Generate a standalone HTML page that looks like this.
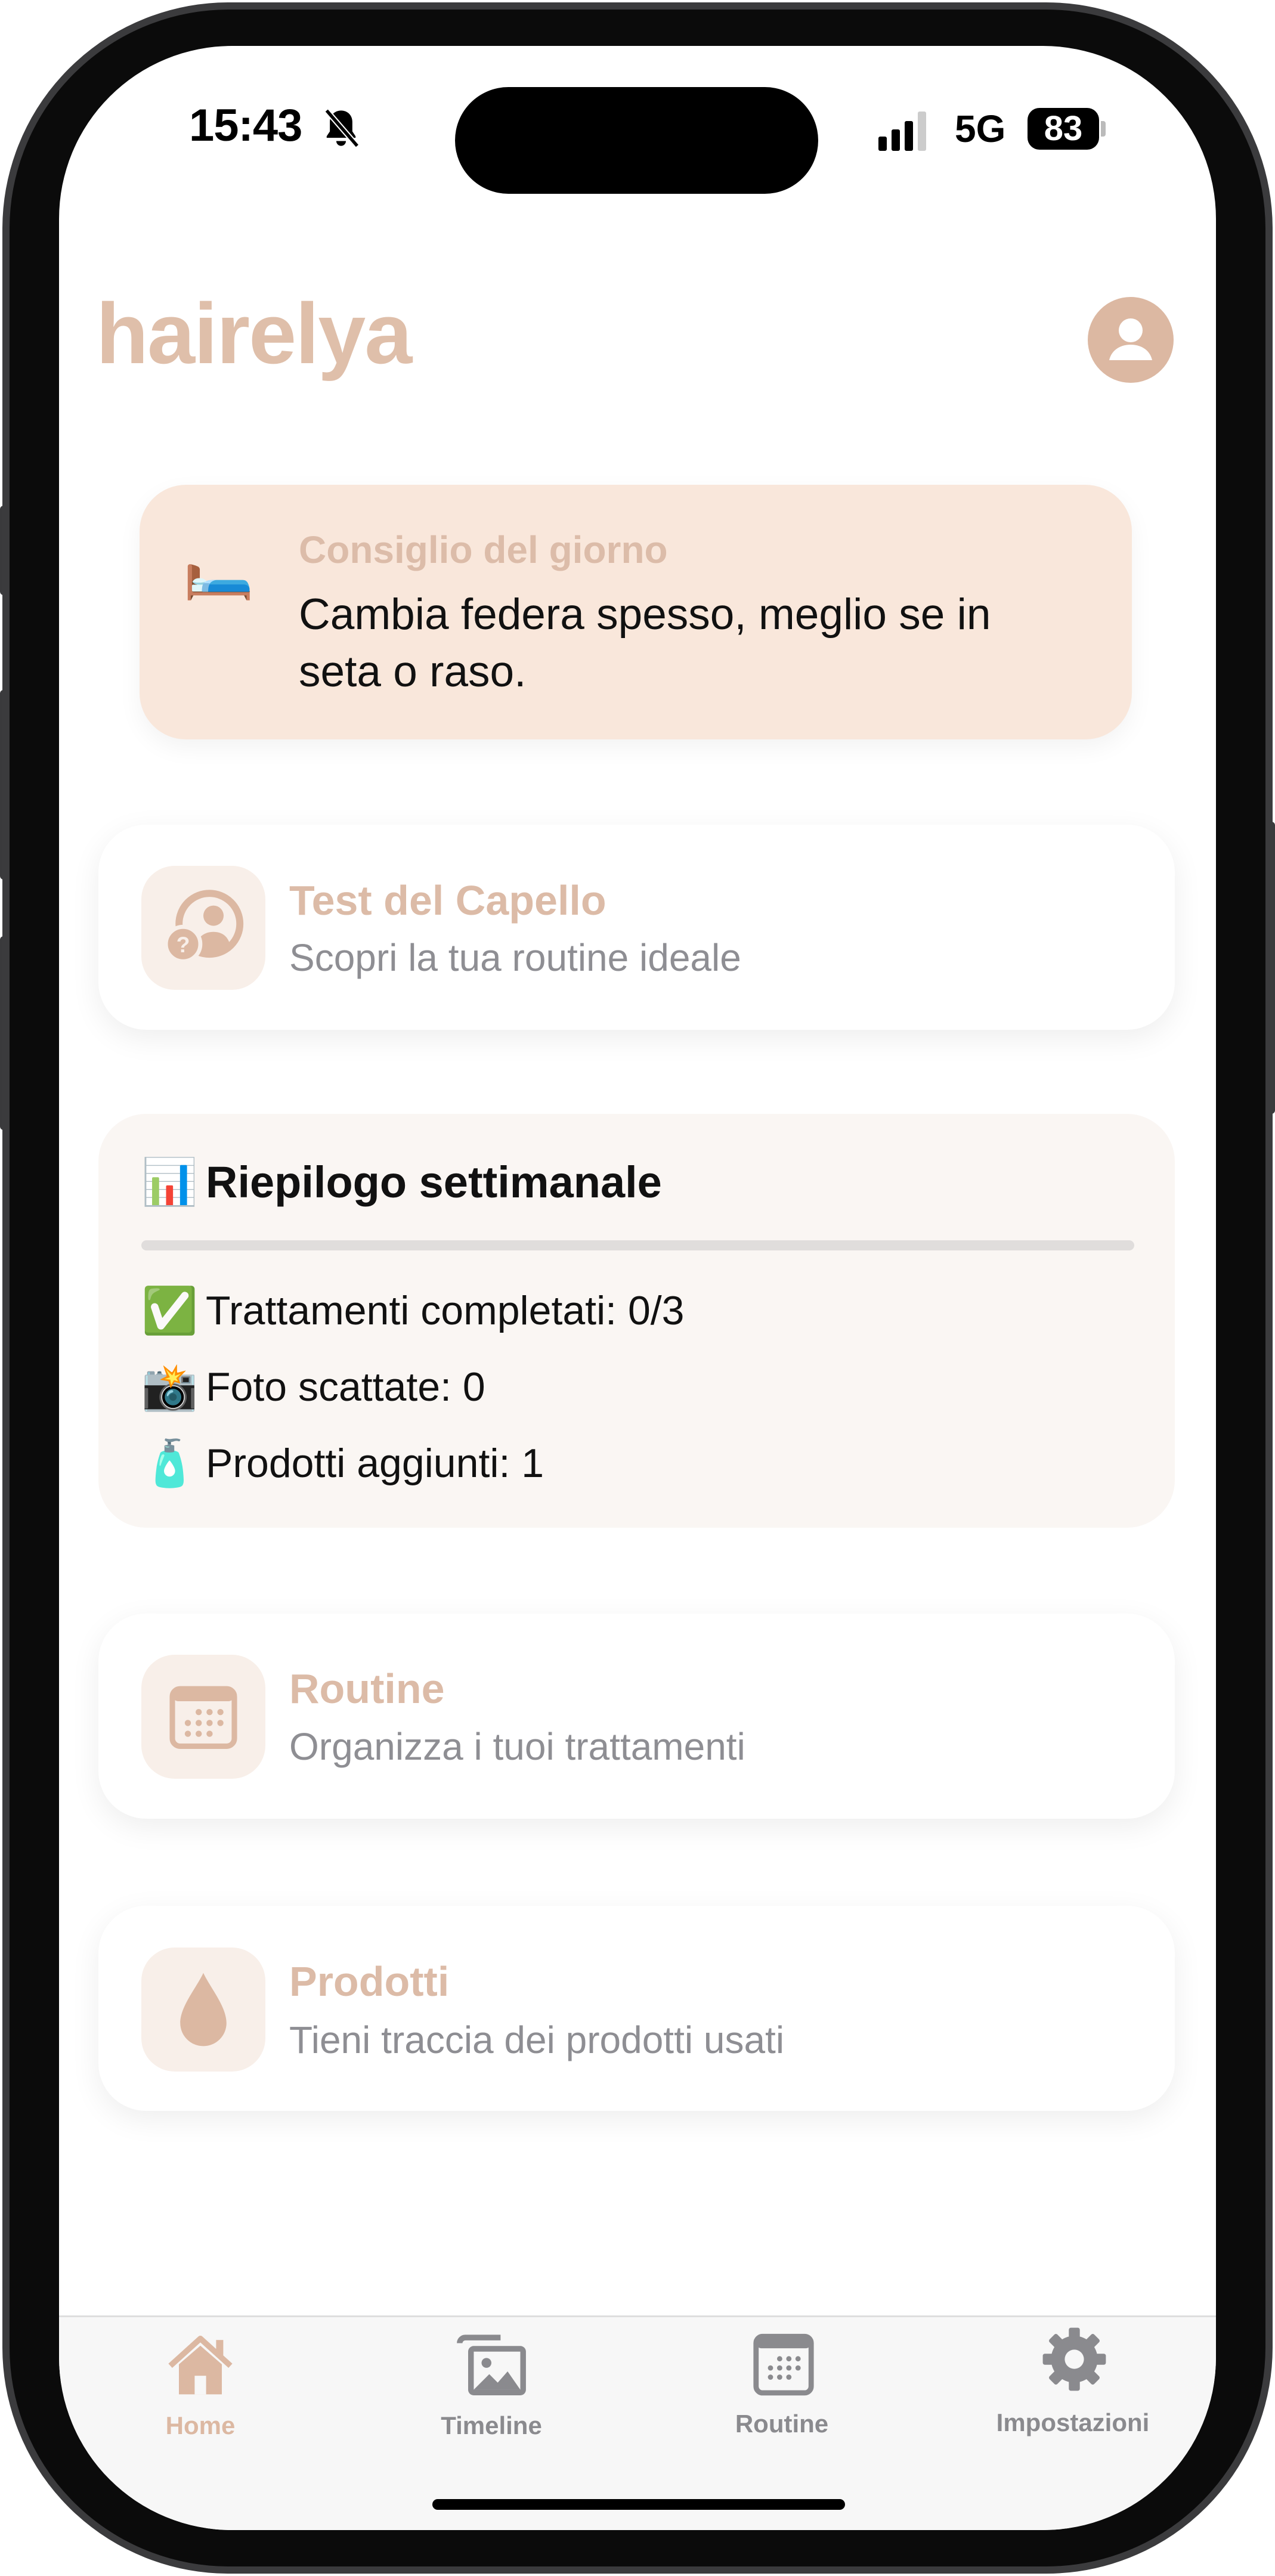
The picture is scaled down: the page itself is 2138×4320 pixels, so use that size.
<!DOCTYPE html>
<html><head><meta charset="utf-8">
<style>
*{margin:0;padding:0;box-sizing:border-box}
html,body{width:2138px;height:4320px;background:#fff;overflow:hidden;font-family:"Liberation Sans",sans-serif}
.abs{position:absolute}
.phone{left:4px;top:4px;width:2130px;height:4312px;border-radius:380px;background:#0b0b0b;border:12px solid #3b3b3d}
.screen{left:99px;top:77px;width:1940px;height:4166px;border-radius:290px;background:#fff;overflow:hidden}
.card{background:#fff;border-radius:80px;box-shadow:0 14px 50px rgba(0,0,0,0.07)}
.ibox{width:208px;height:208px;border-radius:56px;background:#f8efe9;display:flex;align-items:center;justify-content:center}
.t{color:#dcbba7;font-size:70px;font-weight:bold;white-space:nowrap}
.s{color:#8e8e93;font-size:64px;white-space:nowrap}
.row{font-size:68px;color:#111;white-space:nowrap;display:flex;align-items:center}
.row span{font-size:76px;margin-right:18px;width:90px;display:inline-block}
.tab{font-size:42px;color:#8a8a8e;text-align:center;width:400px;font-weight:bold}
.btn{background:#3a3a3c;border-radius:6px}
</style></head><body>
<div class="abs btn" style="left:0;top:848px;width:14px;height:150px"></div>
<div class="abs btn" style="left:0;top:1157px;width:14px;height:318px"></div>
<div class="abs btn" style="left:0;top:1570px;width:14px;height:325px"></div>
<div class="abs btn" style="left:2124px;top:1378px;width:14px;height:490px"></div>
<div class="abs phone"></div>
<div class="abs screen">
  <div class="abs" style="left:218px;top:90px;font-size:76px;font-weight:bold;color:#000;letter-spacing:-1px">15:43</div>
  <svg class="abs" style="left:440px;top:103px" width="66" height="70" viewBox="0 0 24 26"><path d="M12 2c-4 0-7 3-7 7v6l-2 3v1h18v-1l-2-3V9c0-4-3-7-7-7z M9 21a3 3 0 0 0 6 0z" fill="#000"/><path d="M3 2l19 22" stroke="#fff" stroke-width="3.5"/><path d="M3 2l19 22" stroke="#000" stroke-width="2"/></svg>
  <div class="abs" style="left:664px;top:69px;width:609px;height:179px;border-radius:90px;background:#000"></div>
  <div class="abs" style="left:1374px;top:152px;width:14px;height:24px;background:#000;border-radius:3px"></div>
  <div class="abs" style="left:1396px;top:140px;width:14px;height:36px;background:#000;border-radius:3px"></div>
  <div class="abs" style="left:1418px;top:126px;width:14px;height:50px;background:#000;border-radius:3px"></div>
  <div class="abs" style="left:1440px;top:110px;width:14px;height:66px;background:#ccc;border-radius:3px"></div>
  <div class="abs" style="left:1502px;top:102px;font-size:64px;font-weight:bold;color:#000">5G</div>
  <div class="abs" style="left:1624px;top:104px;width:120px;height:70px;border-radius:20px;background:#000;color:#fff;font-size:58px;font-weight:bold;text-align:center;line-height:70px">83</div>
  <div class="abs" style="left:1747px;top:126px;width:8px;height:26px;background:#bbb;border-radius:0 4px 4px 0"></div>

  <div class="abs" style="left:62px;top:400px;font-size:144px;font-weight:bold;color:#dfbfaa;letter-spacing:-2px">hairelya</div>
  <div class="abs" style="left:1725px;top:421px;width:144px;height:144px;border-radius:50%;background:#dcb8a2">
    <svg width="144" height="144" viewBox="0 0 144 144"><circle cx="72" cy="56" r="20" fill="#fff"/><path d="M36 106c4-18 20-26 36-26s32 8 36 26z" fill="#fff"/></svg>
  </div>

  <div class="abs" style="left:135px;top:736px;width:1664px;height:427px;border-radius:78px;background:#f9e7db;box-shadow:0 14px 40px rgba(0,0,0,0.05)"></div>
  <div class="abs" style="left:208px;top:830px;font-size:96px;line-height:1">🛏️</div>
  <div class="abs" style="left:402px;top:808px;font-size:64px;color:#dcbca9;font-weight:bold">Consiglio del giorno</div>
  <div class="abs" style="left:402px;top:906px;font-size:73px;color:#111;line-height:96px;width:1400px">Cambia federa spesso, meglio se in<br>seta o raso.</div>

  <div class="abs card" style="left:66px;top:1306px;width:1805px;height:344px"></div>
  <div class="abs ibox" style="left:138px;top:1375px">
    <svg width="170" height="170" viewBox="0 0 100 100"><circle cx="56" cy="46" r="30" fill="none" stroke="#dcb8a2" stroke-width="7"/><circle cx="60" cy="38" r="10" fill="#dcb8a2"/><path d="M42 70c2-12 10-16 18-16s14 4 16 12c-6 6-14 9-22 8z" fill="#dcb8a2"/><circle cx="30" cy="66" r="17" fill="#dcb8a2" stroke="#f8efe9" stroke-width="4"/><text x="30" y="74" font-size="22" font-weight="bold" text-anchor="middle" fill="#f8efe9" font-family="Liberation Sans">?</text></svg>
  </div>
  <div class="abs t" style="left:386px;top:1393px">Test del Capello</div>
  <div class="abs s" style="left:386px;top:1492px">Scopri la tua routine ideale</div>

  <div class="abs" style="left:66px;top:1791px;width:1805px;height:694px;border-radius:80px;background:#faf6f3"></div>
  <div class="abs row" style="left:138px;top:1860px;font-size:74px;font-weight:bold"><span>📊</span>Riepilogo settimanale</div>
  <div class="abs" style="left:138px;top:2003px;width:1665px;height:17px;border-radius:9px;background:#e0dddc"></div>
  <div class="abs row" style="left:138px;top:2076px"><span>✅</span>Trattamenti completati: 0/3</div>
  <div class="abs row" style="left:138px;top:2204px"><span>📸</span>Foto scattate: 0</div>
  <div class="abs row" style="left:138px;top:2332px"><span>🧴</span>Prodotti aggiunti: 1</div>

  <div class="abs card" style="left:66px;top:2629px;width:1805px;height:344px"></div>
  <div class="abs ibox" style="left:138px;top:2698px">
    <svg width="130" height="130" viewBox="0 0 100 100"><rect x="10" y="14" width="80" height="74" rx="10" fill="none" stroke="#dcb8a2" stroke-width="7"/><rect x="10" y="14" width="80" height="16" rx="8" fill="#dcb8a2"/><g fill="#dcb8a2"><circle cx="44" cy="44" r="4"/><circle cx="58" cy="44" r="4"/><circle cx="72" cy="44" r="4"/><circle cx="30" cy="58" r="4"/><circle cx="44" cy="58" r="4"/><circle cx="58" cy="58" r="4"/><circle cx="72" cy="58" r="4"/><circle cx="30" cy="72" r="4"/><circle cx="44" cy="72" r="4"/><circle cx="58" cy="72" r="4"/></g></svg>
  </div>
  <div class="abs t" style="left:386px;top:2715px">Routine</div>
  <div class="abs s" style="left:386px;top:2815px">Organizza i tuoi trattamenti</div>

  <div class="abs card" style="left:66px;top:3119px;width:1805px;height:344px"></div>
  <div class="abs ibox" style="left:138px;top:3189px">
    <svg width="110" height="140" viewBox="0 0 100 130"><path d="M50 8C40 30 14 60 14 86a36 36 0 0 0 72 0C86 60 60 30 50 8z" fill="#dcb8a2"/></svg>
  </div>
  <div class="abs t" style="left:386px;top:3206px">Prodotti</div>
  <div class="abs s" style="left:386px;top:3307px">Tieni traccia dei prodotti usati</div>

  <div class="abs" style="left:0;top:3806px;width:1940px;height:400px;background:#f7f7f7;border-top:3px solid #dedede"></div>
  <svg class="abs" style="left:177px;top:3828px" width="120" height="120" viewBox="0 0 100 100"><path d="M8 52L50 14l42 38" fill="none" stroke="#dcb8a2" stroke-width="8" stroke-linejoin="round"/><rect x="72" y="16" width="10" height="22" fill="#dcb8a2"/><path d="M20 50v42h60V50L50 24z" fill="#dcb8a2"/><rect x="42" y="66" width="16" height="26" fill="#f7f7f7"/></svg>
  <div class="abs tab" style="left:37px;top:3967px;color:#dcb8a2">Home</div>
  <svg class="abs" style="left:660px;top:3828px" width="130" height="120" viewBox="0 0 110 100"><path d="M10 20a8 8 0 0 1 8-8h50" fill="none" stroke="#8a8a8e" stroke-width="8"/><rect x="22" y="24" width="82" height="70" rx="8" fill="#8a8a8e"/><rect x="30" y="32" width="66" height="54" fill="#f7f7f7"/><circle cx="48" cy="48" r="7" fill="#8a8a8e"/><path d="M30 86l22-22 12 12 14-16 18 26z" fill="#8a8a8e"/></svg>
  <div class="abs tab" style="left:525px;top:3967px">Timeline</div>
  <svg class="abs" style="left:1160px;top:3830px" width="110" height="115" viewBox="0 0 100 100"><rect x="8" y="8" width="84" height="86" rx="10" fill="none" stroke="#8a8a8e" stroke-width="8"/><rect x="8" y="8" width="84" height="18" rx="8" fill="#8a8a8e"/><g fill="#8a8a8e"><circle cx="44" cy="42" r="4"/><circle cx="58" cy="42" r="4"/><circle cx="72" cy="42" r="4"/><circle cx="30" cy="56" r="4"/><circle cx="44" cy="56" r="4"/><circle cx="58" cy="56" r="4"/><circle cx="72" cy="56" r="4"/><circle cx="30" cy="70" r="4"/><circle cx="44" cy="70" r="4"/><circle cx="58" cy="70" r="4"/></g></svg>
  <div class="abs tab" style="left:1012px;top:3964px">Routine</div>
  <svg class="abs" style="left:1645px;top:3822px" width="115" height="115" viewBox="0 0 100 100"><g fill="#8a8a8e"><circle cx="50" cy="50" r="34"/><g id="tth"><rect x="42" y="4" width="16" height="20" rx="3"/><rect x="42" y="76" width="16" height="20" rx="3"/></g><use href="#tth" transform="rotate(45 50 50)"/><use href="#tth" transform="rotate(90 50 50)"/><use href="#tth" transform="rotate(135 50 50)"/></g><circle cx="50" cy="50" r="14" fill="#f7f7f7"/></svg>
  <div class="abs tab" style="left:1500px;top:3962px">Impostazioni</div>
  <div class="abs" style="left:626px;top:4114px;width:692px;height:18px;border-radius:9px;background:#000"></div>
</div>
</body></html>
